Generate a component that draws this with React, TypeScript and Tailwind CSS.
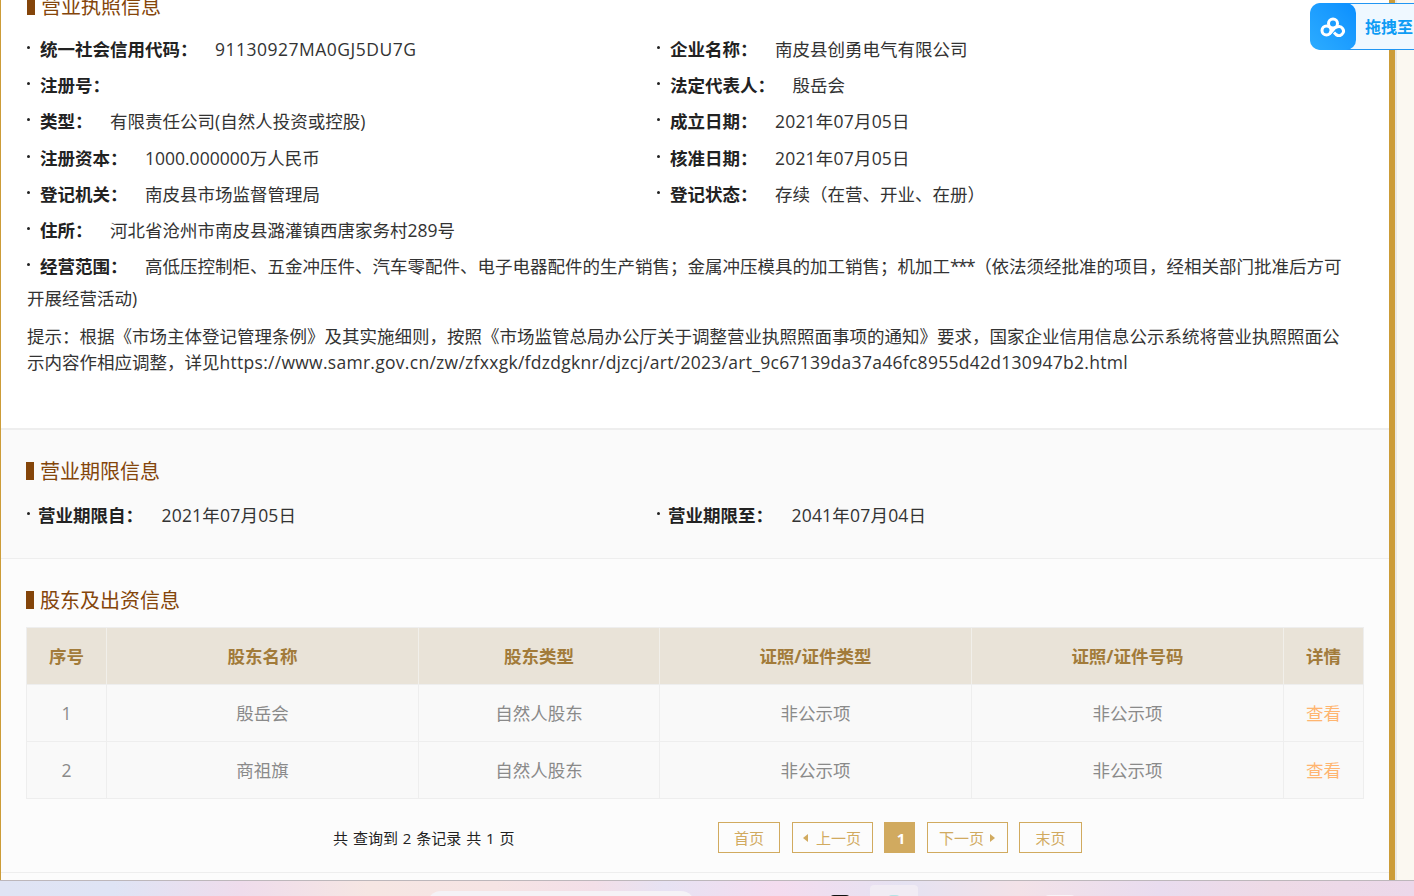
import React from 'react';

const left = [
  { label: '统一社会信用代码：', value: '91130927MA0GJ5DU7G', cls: 'tracking-[0.5px]' },
  { label: '注册号：', value: '' },
  { label: '类型：', value: '有限责任公司(自然人投资或控股)' },
  { label: '注册资本：', value: '1000.000000万人民币' },
  { label: '登记机关：', value: '南皮县市场监督管理局' },
];

const right = [
  { label: '企业名称：', value: '南皮县创勇电气有限公司' },
  { label: '法定代表人：', value: '殷岳会' },
  { label: '成立日期：', value: '2021年07月05日', cls: 'tracking-[0.2px]' },
  { label: '核准日期：', value: '2021年07月05日', cls: 'tracking-[0.2px]' },
  { label: '登记状态：', value: '存续（在营、开业、在册）' },
];

const holders = [
  { no: '1', name: '殷岳会' },
  { no: '2', name: '商祖旗' },
];

const Dot = () => <span className="mt-[10px] mr-[10px] h-[3px] w-[3px] shrink-0 rounded-full bg-[#222]" />;

const Info = ({ label, value, cls = '' }: { label: string; value: string; cls?: string }) => (
  <div className="flex h-[36.2px] items-start">
    <Dot />
    <span className="font-bold text-[#222]">{label}</span>
    {value && <span className={`ml-[17.5px] ${cls}`}>{value}</span>}
  </div>
);

const Title = ({ text }: { text: string }) => (
  <div className="flex h-[20px] items-center gap-[6px] text-[20px] leading-[20px] text-[#84450a]">
    <span className="h-[18px] w-[8px] bg-[#84450a]" />
    <span className="mt-[2px]">{text}</span>
  </div>
);

const Pager = ({ children, active, w }: { children: React.ReactNode; active?: boolean; w: string }) => (
  <span
    className={`flex h-[31px] items-center justify-center border border-[#d1aa5f] text-[15px] ${w} ${
      active ? 'bg-[#d1aa5f] pl-[3px] font-bold text-white' : 'text-[#d1aa5f]'
    }`}
  >
    {children}
  </span>
);

const cols = 'grid grid-cols-[80px_312px_241px_312px_312px_1fr]';
const th = 'border-r border-[#f1efea] font-bold text-[#a27b3a] flex items-center justify-center';
const td = 'border-r border-[#eeeeee] flex items-center justify-center text-[#8a8a8a]';

export default function App() {
  return (
    <div
      className="relative flex h-[896px] w-[1414px] flex-col overflow-hidden bg-[#fbf8f1] text-[17.5px] leading-[26px] text-[#333]"
      style={{ fontFamily: '"Open Sans", "Noto Sans CJK SC", sans-serif' }}
    >
      <div className="flex h-[880px] shrink-0">
        <div className="w-[1395px] shrink-0 border-r-[6px] border-l border-r-[#cc9c38] border-l-[#cc9c38] bg-[#fcfcfc]">
          {/* 营业执照信息 */}
          <section className="-mt-[4px] h-[432px] bg-white pr-[46px] pl-[26px]">
            <Title text="营业执照信息" />
            <div className="mt-[20px] grid grid-cols-[630px_1fr]">
              <div>
                {left.map((r) => (
                  <Info key={r.label} {...r} />
                ))}
              </div>
              <div>
                {right.map((r) => (
                  <Info key={r.label} {...r} />
                ))}
              </div>
            </div>
            <Info label="住所：" value="河北省沧州市南皮县潞灌镇西唐家务村289号" />
            <div className="-mt-[3px] leading-[32px]">
              <span className="mr-[10px] inline-block h-[3px] w-[3px] -translate-y-[7px] rounded-full bg-[#222]" />
              <span className="font-bold text-[#222]">经营范围：</span>
              <span className="ml-[17.5px]">
                高低压控制柜、五金冲压件、汽车零配件、电子电器配件的生产销售；金属冲压模具的加工销售；机加工
                <span className="tracking-[-1.6px]">***</span>
                （依法须经批准的项目，经相关部门批准后方可开展经营活动)
              </span>
            </div>
            <p className="mt-[9px]">
              提示：根据《市场主体登记管理条例》及其实施细则，按照《市场监管总局办公厅关于调整营业执照照面事项的通知》要求，国家企业信用信息公示系统将营业执照照面公示内容作相应调整，详见
              <span className="tracking-[0.28px]">
                https://www.samr.gov.cn/zw/zfxxgk/fdzdgknr/djzcj/art/2023/art_9c67139da37a46fc8955d42d130947b2.html
              </span>
            </p>
          </section>

          {/* 营业期限信息 */}
          <section className="h-[131px] border-t-2 border-b border-[#eeeeee] bg-[#fafafa] pt-[31px] pl-[25px]">
            <Title text="营业期限信息" />
            <div className="mt-[21px] grid grid-cols-[630px_1fr]">
              <div className="flex">
                <span className="ml-[1px] flex">
                  <Dot />
                </span>
                <span className="-ml-[2px] font-bold text-[#222]">营业期限自：</span>
                <span className="ml-[18.5px] tracking-[0.2px]">2021年07月05日</span>
              </div>
              <div className="flex">
                <span className="ml-[1px] flex">
                  <Dot />
                </span>
                <span className="-ml-[2px] font-bold text-[#222]">营业期限至：</span>
                <span className="ml-[18.5px] tracking-[0.2px]">2041年07月04日</span>
              </div>
            </div>
          </section>

          {/* 股东及出资信息 */}
          <section className="h-[314px] border-b border-[#eeeeee] pt-[31px] pl-[25px]">
            <Title text="股东及出资信息" />
            <div className="mt-[17px] w-[1338px] border border-[#eeeeee]">
              <div className={`${cols} h-[56px] bg-[#e9e3d8]`}>
                <div className={th}>序号</div>
                <div className={th}>股东名称</div>
                <div className={th}>股东类型</div>
                <div className={th}>证照/证件类型</div>
                <div className={th}>证照/证件号码</div>
                <div className="flex items-center justify-center font-bold text-[#a27b3a]">详情</div>
              </div>
              {holders.map((h) => (
                <div key={h.no} className={`${cols} h-[57px] border-t border-[#eeeeee] bg-[#f9f9f9]`}>
                  <div className={td}>{h.no}</div>
                  <div className={td}>{h.name}</div>
                  <div className={td}>自然人股东</div>
                  <div className={td}>非公示项</div>
                  <div className={td}>非公示项</div>
                  <div className="flex items-center justify-center text-[#ffb570]">查看</div>
                </div>
              ))}
            </div>
            <div className="mt-[23px] flex items-center">
              <span className="ml-[307px] w-[385px] text-[15px] text-[#222] [word-spacing:1px]">
                共 查询到 2 条记录 共 1 页
              </span>
              <div className="flex gap-[11.5px]">
                <Pager w="w-[62px]">首页</Pager>
                <Pager w="w-[81px]">
                  <span className="mr-[8px] border-y-[4px] border-r-[5px] border-y-transparent border-r-[#d1aa5f]" />
                  上一页
                </Pager>
                <Pager w="w-[31px]" active>
                  1
                </Pager>
                <Pager w="w-[81px]">
                  下一页
                  <span className="ml-[6px] border-y-[4px] border-l-[5px] border-y-transparent border-l-[#d1aa5f]" />
                </Pager>
                <Pager w="w-[63px]">末页</Pager>
              </div>
            </div>
          </section>
        </div>
        <div className="w-[2px] shrink-0 bg-[#ebe8e2]" />
      </div>

      {/* 任务栏 */}
      <div className="relative h-[16px] shrink-0 border-t border-[#bdb7bb] bg-[linear-gradient(90deg,#e0e4f4_0%,#dfe4f5_8%,#efdcec_17%,#f6e6e3_26%,#f6e4e4_35%,#f3dfe8_42%,#e7e2f3_47%,#f4dcef_55%,#e5e2f2_64%,#f3e2e8_72%,#e9dcef_82%,#eedae6_90%,#ecd8ea_100%)]">
        <div className="absolute top-[10px] left-[427px] h-[20px] w-[268px] rounded-t-[14px] bg-[#f5f2f6]" />
        <div className="absolute top-[14px] left-[830px] h-[4px] w-[20px] rounded-t-[4px] bg-[#111]" />
        <div className="absolute top-[4px] left-[870px] h-[20px] w-[48px] rounded-[4px] bg-[#f1ecf4]" />
        <div className="absolute top-[14px] left-[888px] h-[4px] w-[12px] rounded-t-[4px] bg-[#b5e3e6]" />
        <div className="absolute top-[14px] left-[1045px] h-[4px] w-[30px] rounded-t-[4px] bg-[#f7f4f8]" />
      </div>

      {/* 悬浮窗 */}
      <div className="absolute top-[3px] left-[1310px] flex h-[47px] w-[110px] items-center rounded-l-[12px] border border-[#2196f3] bg-[#eff8ff]">
        <div className="-ml-px flex h-[47px] w-[46px] shrink-0 items-center justify-center rounded-[10px] bg-gradient-to-tr from-[#2cacff] to-[#0a8fff]">
          <svg width="26" height="20" viewBox="0 0 26 20" fill="none" stroke="#fff" strokeWidth="3">
            <circle cx="13" cy="6.5" r="4.5" />
            <circle cx="6.5" cy="13.5" r="4.5" />
            <path d="M9.5 16.5 C13 14 14 10 17 10 A4.5 4.5 0 1 1 16 17.5 L14 15.5" />
          </svg>
        </div>
        <span className="ml-[9px] text-[16px] font-bold whitespace-nowrap text-[#0d9cf5]">拖拽至</span>
      </div>
    </div>
  );
}
